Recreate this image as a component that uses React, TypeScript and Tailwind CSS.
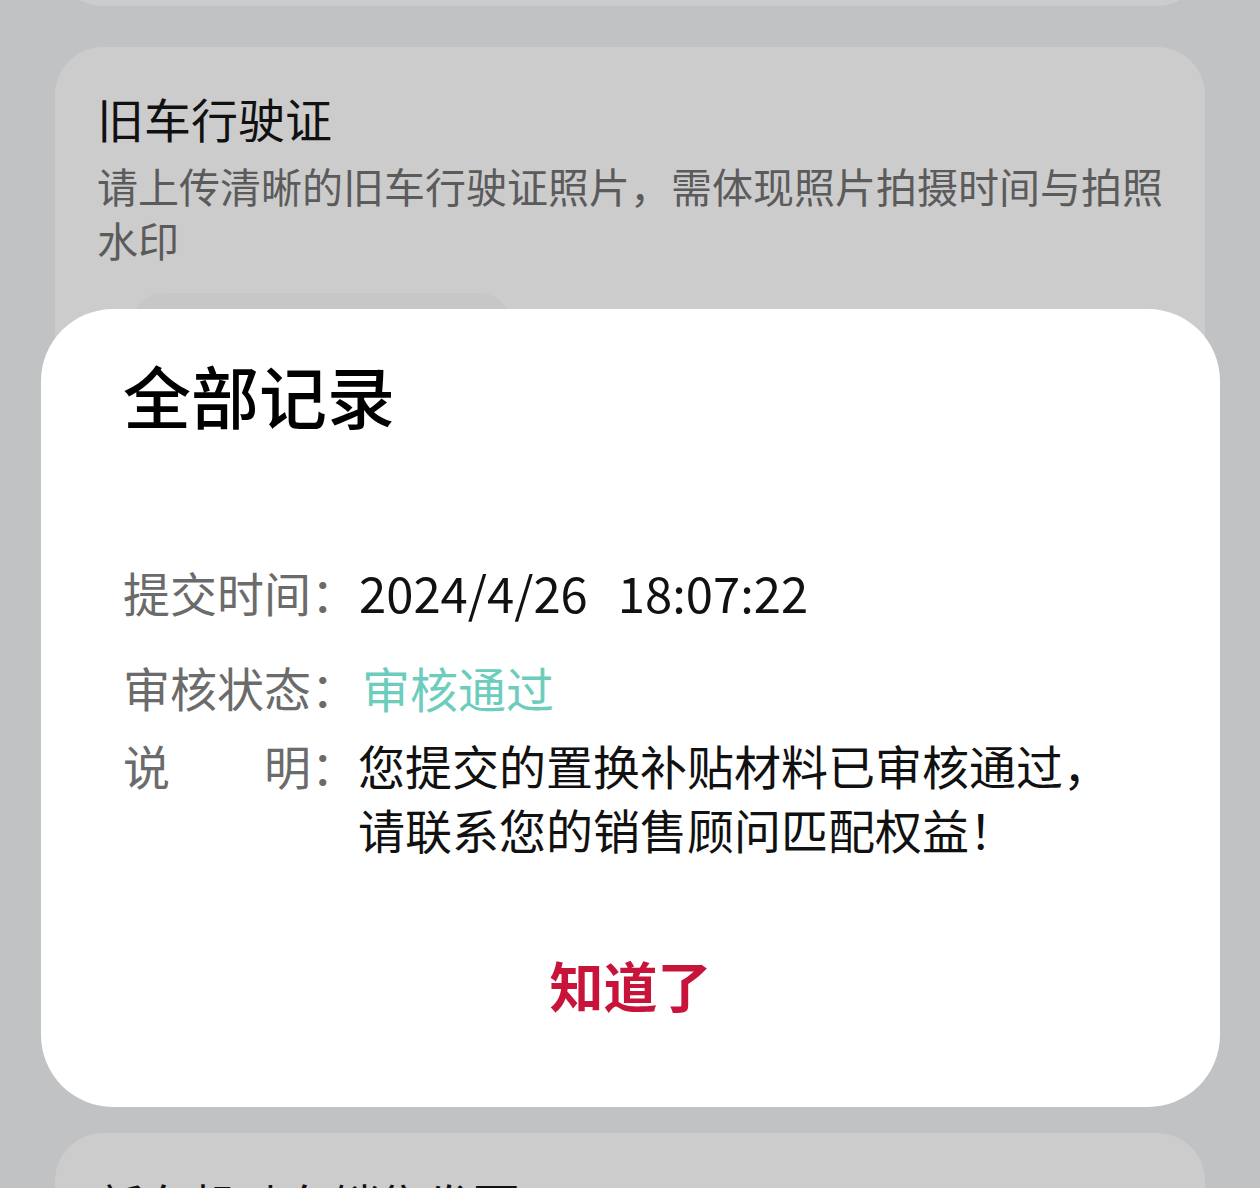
export default function App() {
  return (
    <div
      className="relative h-[1188px] w-[1260px] overflow-hidden bg-[#c1c2c4]"
      style={{ fontFamily: '"Noto Sans CJK SC", "Noto Sans", sans-serif' }}
    >
      {/* page behind the sheet */}
      <div className="flex flex-col px-[55px]">
        <div className="-mt-[194px] h-[200px] rounded-[48px] bg-[#cccccc]" />

        <div className="mt-[41px] h-[1045px] rounded-[48px] bg-[#cccccc] pl-[42px] pt-[41px]">
          <div className="text-[47px] leading-[60px] text-[#111]">旧车行驶证</div>
          <div className="mt-[10px] whitespace-nowrap text-[41px] leading-[54px] text-[#5b5b5b]">
            请上传清晰的旧车行驶证照片，需体现照片拍摄时间与拍照
            <br />
            水印
          </div>
          <div className="ml-[36px] mt-[27px] h-[300px] w-[377px] rounded-[30px] bg-[#c7c7c7]" />
        </div>

        <div className="mt-[41px] h-[300px] rounded-[48px] bg-[#cccccc] pl-[42px] pt-[41px]">
          <div className="text-[47px] leading-[60px] text-[#111]">新车机动车销售发票</div>
        </div>
      </div>

      {/* dialog */}
      <div className="absolute left-[41px] top-[309px] flex h-[798px] w-[1179px] flex-col rounded-[72px] bg-white px-[82px] pt-[46px]">
        <div className="text-[68px] font-medium leading-[80px] text-black">全部记录</div>

        <div className="mt-[125px] flex text-[47px] leading-[64px]">
          <div className="w-[236px] shrink-0 text-[#6b6b6b]">提交时间：</div>
          <div className="text-[49px] text-[#111]">
            2024/4/26<span className="ml-[30px]">18:07:22</span>
          </div>
        </div>

        <div className="mt-[31px] flex text-[47px] leading-[64px]">
          <div className="w-[239px] shrink-0 text-[#6b6b6b]">审核状态：</div>
          <div className="text-[48px] text-[#6dcdbd]">审核通过</div>
        </div>

        <div className="mt-[14px] flex text-[47px] leading-[64px]">
          <div className="flex w-[235px] shrink-0 justify-between text-[#6b6b6b]">
            <span>说</span>
            <span>明：</span>
          </div>
          <div className="whitespace-nowrap text-[#111]">
            您提交的置换补贴材料已审核通过，
            <br />
            请联系您的销售顾问匹配权益！
          </div>
        </div>

        <button className="mt-[88px] self-center text-[54px] font-bold leading-[72px] text-[#c8143a]">
          知道了
        </button>
      </div>
    </div>
  );
}
